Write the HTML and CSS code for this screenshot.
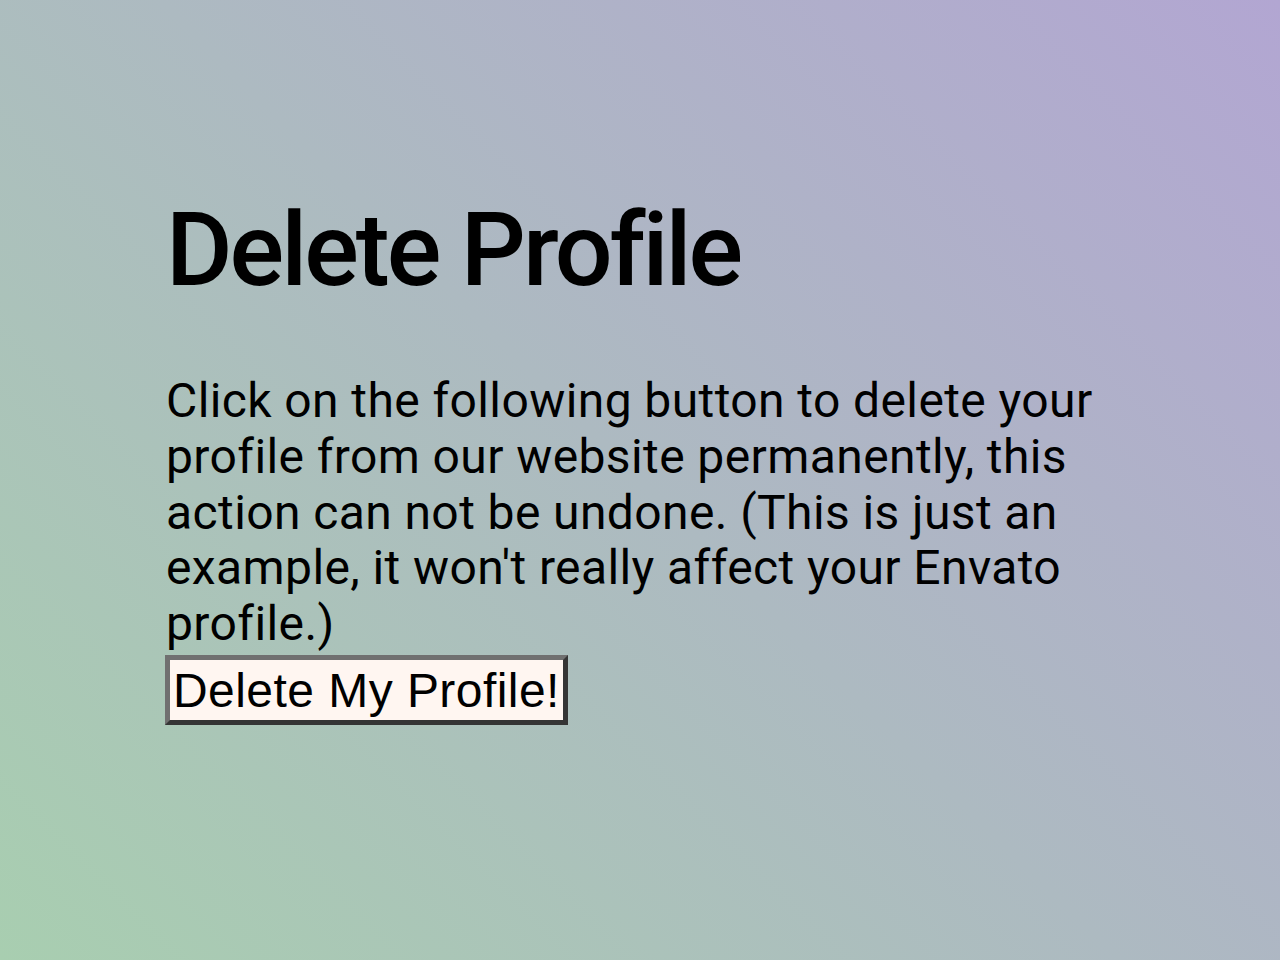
FILE: index.html
```html
<!DOCTYPE html>
<html lang="en">
<head>
<meta charset="utf-8">
<title>Delete Profile</title>
<link rel="stylesheet" href="styles.css">
</head>
<body>
  <main class="panel">
    <h1 class="title">Delete Profile</h1>
    <p class="message">Click on the following button to delete your profile from our website permanently, this action can not be undone. (This is just an example, it won't really affect your Envato profile.)</p>
    <button class="delete-btn" type="button">Delete My Profile!</button>
  </main>
</body>
</html>
```
FILE: styles.css
```css
html, body {
  margin: 0;
  height: 100%;
}

body {
  background: linear-gradient(45deg, #a8ceb0 0%, #b2a6d2 100%);
  font-family: Roboto, "Noto Sans", sans-serif;
  color: #000;
}

.panel {
  width: 960px;
  margin-left: 166px;
  padding-top: 190px;
  display: flex;
  flex-direction: column;
  align-items: flex-start;
}

.title {
  margin: 0 0 63px;
  font-size: 102px;
  font-weight: 500;
  line-height: normal;
  letter-spacing: -3px;
}

.message {
  margin: 0 0 3.5px;
  font-size: 48px;
  font-weight: 400;
  line-height: 55.75px;
  letter-spacing: 0.4px;
}

.delete-btn {
  margin: 0 0 0 -1px;
  font-family: "Liberation Sans", Arial, sans-serif;
  font-size: 48px;
  line-height: normal;
  letter-spacing: 0.45px;
  color: #000;
  background: #fff6f1;
  padding: 2.5px 3px;
  border: 5px solid;
  border-color: #707070 #353535 #353535 #707070;
  border-radius: 0;
}
```
